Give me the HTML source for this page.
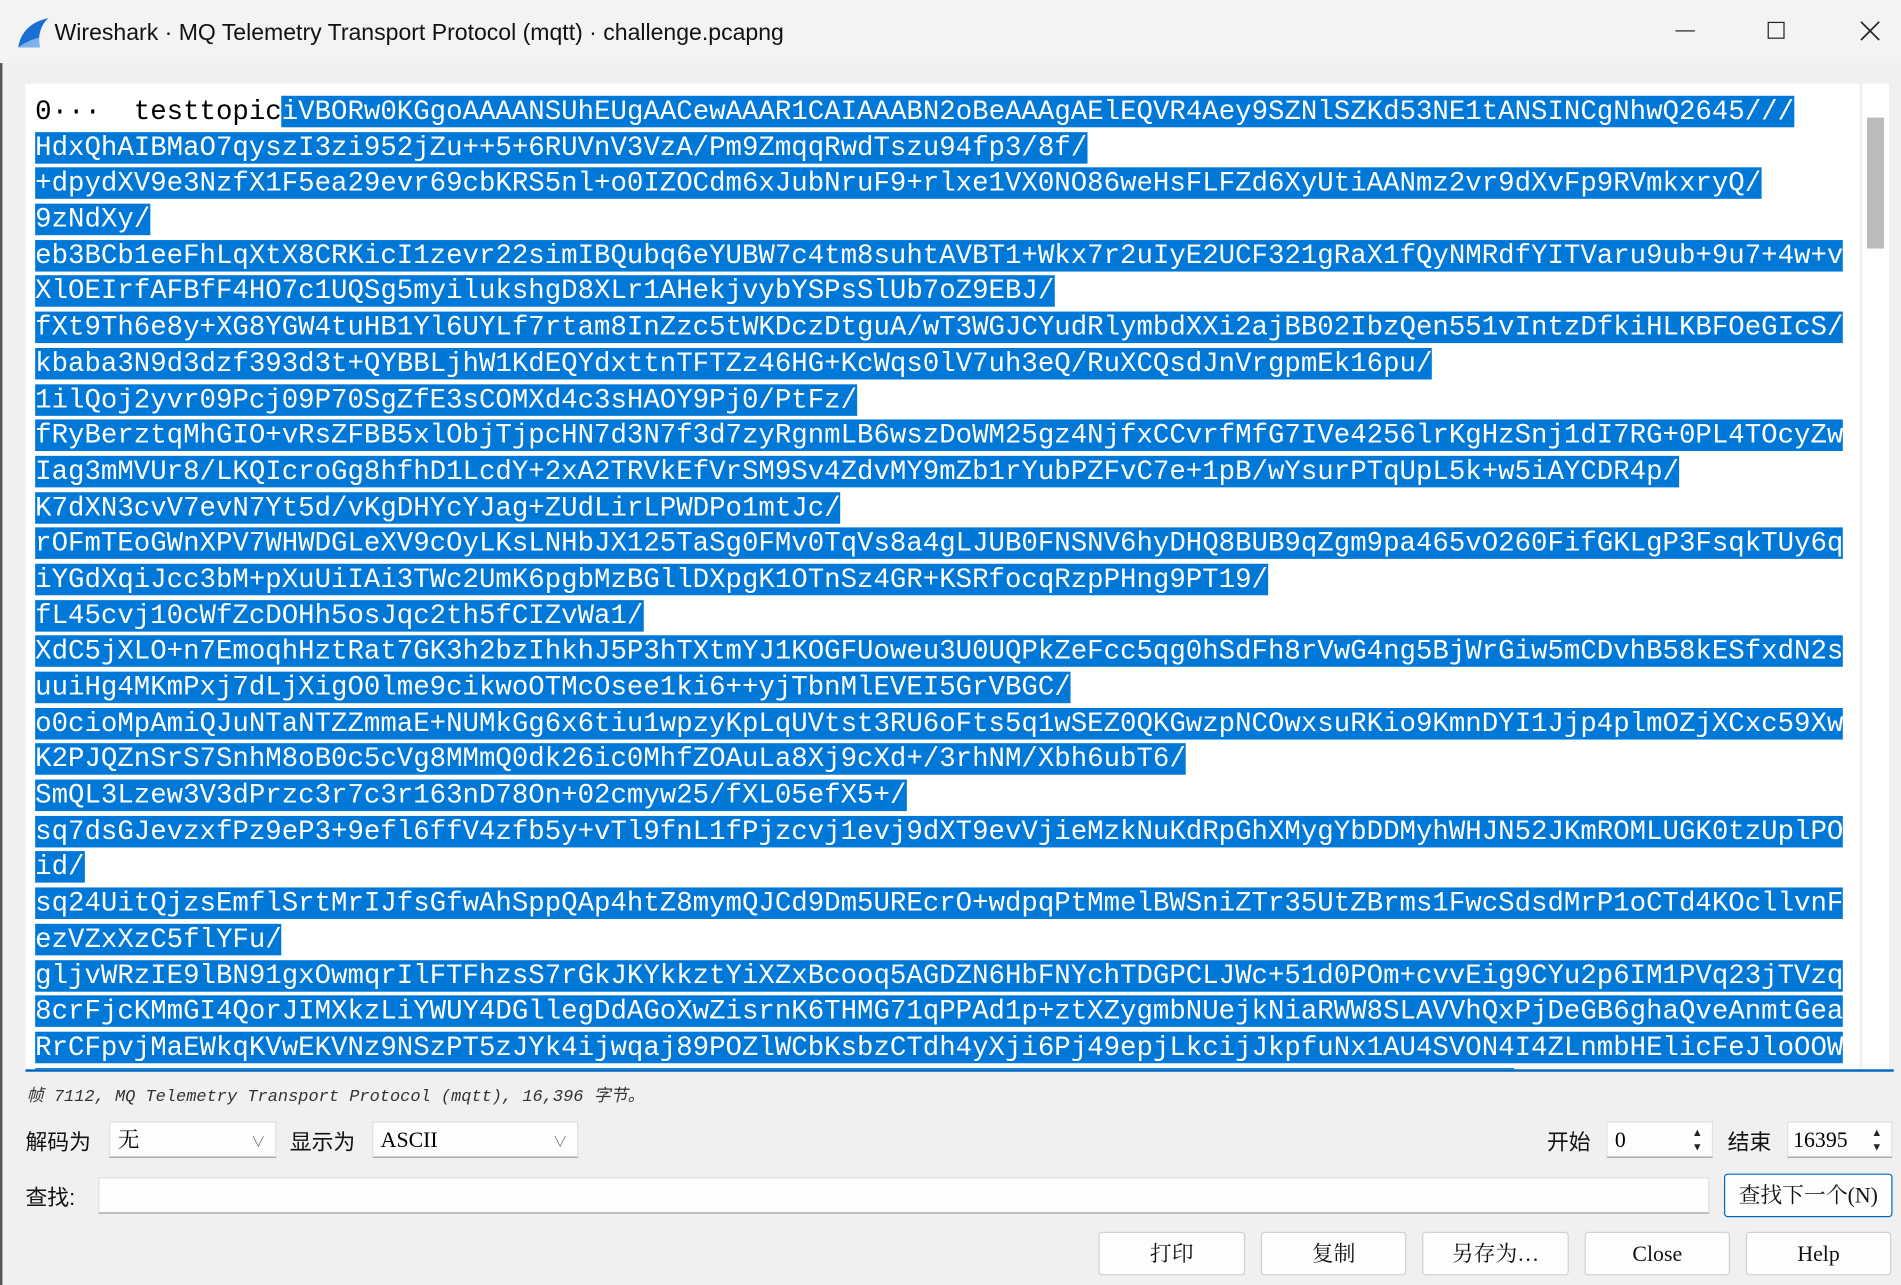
<!DOCTYPE html>
<html><head><meta charset="utf-8">
<style>
html,body{margin:0;padding:0;width:1901px;height:1285px;overflow:hidden;background:#f0f0f0;}
#s{position:absolute;left:0;top:0;width:1568px;height:1060px;transform:scale(1.21237);transform-origin:0 0;background:#f0f0f0;font-family:"Liberation Sans","Noto Sans CJK SC",sans-serif;}
.a{position:absolute;}
#title{left:0;top:0;width:1568px;height:52px;background:#f3f3f3;}
#title .t{left:45px;top:17px;font-size:19px;color:#111;white-space:nowrap;}
#txt{left:21px;top:69px;width:1513px;height:813px;background:#fff;overflow:hidden;}
#lines{position:absolute;left:8px;top:9px;font-family:"Liberation Mono",monospace;font-size:22.6px;line-height:29.69px;white-space:pre;color:#000;}
.sel{background:#0078d7;color:#fff;}
#sb{left:1536px;top:69px;width:22px;height:813px;background:#fff;}
#thumb{left:1540px;top:97px;width:14px;height:108px;background:#bbb;}
.lbl{font-size:18px;color:#111;white-space:nowrap;}
.box{background:#fdfdfd;border:1px solid #e0e0e0;border-bottom:1px solid #999;box-sizing:border-box;font-family:"Liberation Serif","Noto Serif CJK SC",serif;font-size:18px;padding-left:6px;line-height:28px;}
.btn{background:#fdfdfd;border:1px solid #d0d0d0;box-sizing:border-box;border-radius:3px;text-align:center;font-family:"Liberation Serif","Noto Serif CJK SC",serif;font-size:18px;line-height:34px;color:#111;}
.chev{position:absolute;right:8px;top:2px;font-size:12px;color:#555;}
.spin{position:absolute;right:2px;top:2px;width:20px;height:24px;font-size:9px;line-height:12px;text-align:center;color:#222;}
</style></head><body><div id="s">
<div class="a" style="left:0;top:0;width:105px;height:2px;background:#333"></div>
<div class="a" style="left:0;top:0;width:2px;height:1060px;background:#555"></div>
<div id="title" class="a">
<svg class="a" style="left:13px;top:13px" width="28" height="28" viewBox="0 0 28 28"><path d="M2 26 C4 14 12 5 27 2 C20 8 18 18 20 26 Z" fill="#1a6fd6"/><path d="M2 26 L20 26 C19 22 19 20 19 18 C12 20 6 23 2 26Z" fill="#7fb2ea"/></svg>
<div class="a t">Wireshark · MQ Telemetry Transport Protocol (mqtt) · challenge.pcapng</div>
<div class="a" style="left:1382px;top:25px;width:16px;height:1px;background:#222"></div>
<div class="a" style="left:1458px;top:18px;width:14px;height:14px;border:1.5px solid #222;box-sizing:border-box"></div>
<svg class="a" style="left:1534px;top:17px" width="17" height="17"><path d="M1 1L16 16M16 1L1 16" stroke="#222" stroke-width="1.4"/></svg>
</div>
<div id="txt" class="a"><div id="lines">0···  testtopic<span class="sel">iVBORw0KGgoAAAANSUhEUgAACewAAAR1CAIAAABN2oBeAAAgAElEQVR4Aey9SZNlSZKd53NE1tANSINCgNhwQ2645///</span>
<span class="sel">HdxQhAIBMaO7qyszI3zi952jZu++5+6RUVnV3VzA/Pm9ZmqqRwdTszu94fp3/8f/</span>
<span class="sel">+dpydXV9e3NzfX1F5ea29evr69cbKRS5nl+o0IZOCdm6xJubNruF9+rlxe1VX0NO86weHsFLFZd6XyUtiAANmz2vr9dXvFp9RVmkxryQ/</span>
<span class="sel">9zNdXy/</span>
<span class="sel">eb3BCb1eeFhLqXtX8CRKicI1zevr22simIBQubq6eYUBW7c4tm8suhtAVBT1+Wkx7r2uIyE2UCF321gRaX1fQyNMRdfYITVaru9ub+9u7+4w+v</span>
<span class="sel">XlOEIrfAFBfF4HO7c1UQSg5myilukshgD8XLr1AHekjvybYSPsSlUb7oZ9EBJ/</span>
<span class="sel">fXt9Th6e8y+XG8YGW4tuHB1Yl6UYLf7rtam8InZzc5tWKDczDtguA/wT3WGJCYudRlymbdXXi2ajBB02IbzQen551vIntzDfkiHLKBFOeGIcS/</span>
<span class="sel">kbaba3N9d3dzf393d3t+QYBBLjhW1KdEQYdxttnTFTZz46HG+KcWqs0lV7uh3eQ/RuXCQsdJnVrgpmEk16pu/</span>
<span class="sel">1ilQoj2yvr09Pcj09P70SgZfE3sCOMXd4c3sHAOY9Pj0/PtFz/</span>
<span class="sel">fRyBerztqMhGIO+vRsZFBB5xlObjTjpcHN7d3N7f3d7zyRgnmLB6wszDoWM25gz4NjfxCCvrfMfG7IVe4256lrKgHzSnj1dI7RG+0PL4TOcyZw</span>
<span class="sel">Iag3mMVUr8/LKQIcroGg8hfhD1LcdY+2xA2TRVkEfVrSM9Sv4ZdvMY9mZb1rYubPZFvC7e+1pB/wYsurPTqUpL5k+w5iAYCDR4p/</span>
<span class="sel">K7dXN3cvV7evN7Yt5d/vKgDHYcYJag+ZUdLirLPWDPo1mtJc/</span>
<span class="sel">rOFmTEoGWnXPV7WHWDGLeXV9cOyLKsLNHbJX125TaSg0FMv0TqVs8a4gLJUB0FNSNV6hyDHQ8BUB9qZgm9pa465vO260FifGKLgP3FsqkTUy6q</span>
<span class="sel">iYGdXqiJcc3bM+pXuUiIAi3TWc2UmK6pgbMzBGllDXpgK1OTnSz4GR+KSRfocqRzpPHng9PT19/</span>
<span class="sel">fL45cvj10cWfZcDOHh5osJqc2th5fCIZvWa1/</span>
<span class="sel">XdC5jXLO+n7EmoqhHztRat7GK3h2bzIhkhJ5P3hTXtmYJ1KOGFUoweu3U0UQPkZeFcc5qg0hSdFh8rVwG4ng5BjWrGiw5mCDvhB58kESfxdN2s</span>
<span class="sel">uuiHg4MKmPxj7dLjXigO0lme9cikwoOTMcOsee1ki6++yjTbnMlEVEI5GrVBGC/</span>
<span class="sel">o0cioMpAmiQJuNTaNTZZmmaE+NUMkGg6x6tiu1wpzyKpLqUVtst3RU6oFts5q1wSEZ0QKGwzpNCOwxsuRKio9KmnDYI1Jjp4plmOZjXCxc59Xw</span>
<span class="sel">K2PJQZnSrS7SnhM8oB0c5cVg8MMmQ0dk26ic0MhfZOAuLa8Xj9cXd+/3rhNM/Xbh6ubT6/</span>
<span class="sel">SmQL3Lzew3V3dPrzc3r7c3r163nD78On+02cmyw25/fXL05efX5+/</span>
<span class="sel">sq7dsGJevzxfPz9eP3+9efl6ffV4zfb5y+vTl9fnL1fPjzcvj1evj9dXT9evVjieMzkNuKdRpGhXMygYbDDMyhWHJN52JKmROMLUGK0tzUplPO</span>
<span class="sel">id/</span>
<span class="sel">sq24UitQjzsEmflSrtMrIJfsGfwAhSppQAp4htZ8mymQJCd9Dm5UREcrO+wdpqPtMmelBWSniZTr35UtZBrms1FwcSdsdMrP1oCTd4KOcllvnF</span>
<span class="sel">ezVZxXzC5flYFu/</span>
<span class="sel">gljvWRzIE9lBN91gxOwmqrIlFTFhzsS7rGkJKYkkztYiXZxBcooq5AGDZN6HbFNYchTDGPCLJWc+51d0POm+cvvEig9CYu2p6IM1PVq23jTVzq</span>
<span class="sel">8crFjcKMmGI4QorJIMXkzLiYWUY4DGllegDdAGoXwZisrnK6THMG71qPPAd1p+ztXZygmbNUejkNiaRWW8SLAVVhQxPjDeGB6ghaQveAnmtGea</span>
<span class="sel">RrCFpvjMaEWkqKVwEKVNz9NSzPT5zJYk4ijwqaj89POZlWCbKsbzCTdh4yXji6Pj49epjLkcijJkpfuNx1AU4SVON4I4ZLnmbHElicFeJloOOW</span>
<span class="sel">xxxxxxxxxxxxxxxxxxxxxxxxxxxxxxxxxxxxxxxxxxxxxxxxxxxxxxxxxxxxxxxxxxxxxxxxxxxxxxxxxxxxxxxxxx</span></div></div>
<div id="sb" class="a"></div>
<div id="thumb" class="a"></div>
<div class="a" style="left:21px;top:882px;width:1541px;height:2px;background:#0067c0"></div>
<div class="a" style="left:22px;top:893px;font-family:'Liberation Mono','Noto Sans CJK SC',monospace;font-style:italic;font-size:14px;color:#333;white-space:nowrap">帧 7112, MQ Telemetry Transport Protocol (mqtt), 16,396 字节。</div>

<div class="a lbl" style="left:21px;top:928px">解码为</div>
<div class="a box" style="left:90px;top:925px;width:138px;height:30px">无<span class="chev">∨</span></div>
<div class="a lbl" style="left:239px;top:928px">显示为</div>
<div class="a box" style="left:307px;top:925px;width:170px;height:30px">ASCII<span class="chev">∨</span></div>
<div class="a lbl" style="left:1276px;top:928px">开始</div>
<div class="a box" style="left:1325px;top:925px;width:88px;height:30px">0<span class="spin">▲<br>▼</span></div>
<div class="a lbl" style="left:1425px;top:928px">结束</div>
<div class="a box" style="left:1474px;top:925px;width:87px;height:30px;padding-left:4px">16395<span class="spin">▲<br>▼</span></div>

<div class="a lbl" style="left:21px;top:974px">查找:</div>
<div class="a box" style="left:81px;top:971px;width:1329px;height:30px"></div>
<div class="a btn" style="left:1422px;top:968px;width:139px;height:36px;border-color:#0067c0">查找下一个(N)</div>

<div class="a btn" style="left:906px;top:1016px;width:121px;height:36px">打印</div>
<div class="a btn" style="left:1040px;top:1016px;width:120px;height:36px">复制</div>
<div class="a btn" style="left:1173px;top:1016px;width:121px;height:36px">另存为…</div>
<div class="a btn" style="left:1307px;top:1016px;width:120px;height:36px">Close</div>
<div class="a btn" style="left:1440px;top:1016px;width:120px;height:36px">Help</div>
</div></body></html>
